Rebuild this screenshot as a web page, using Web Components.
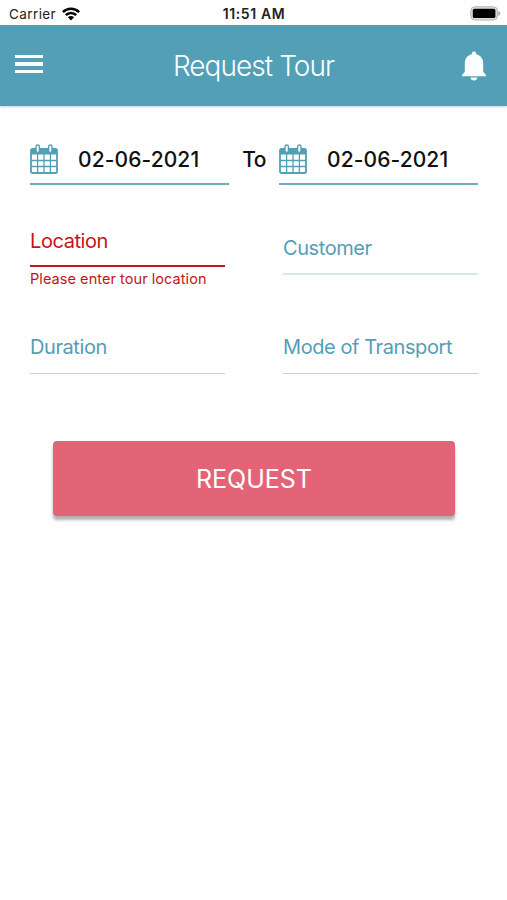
<!DOCTYPE html>
<html lang="en">
<head>
<meta charset="utf-8">
<title>Request Tour</title>
<style>
  :root {
    --color-primary: #539fb6;
    --color-line: #d4e8e6;
    --color-error: #c5151b;
    --color-action: #e36476;
  }
  body {
    margin: 0;
    background-color: #fefefe;
    font-family: Inter, "Liberation Sans", sans-serif;
  }
</style>
</head>
<body>
<tour-screen></tour-screen>

<script>
const define = (name, html, setup) => {
  const template = document.createElement("template");
  template.innerHTML = html;
  customElements.define(name, class extends HTMLElement {
    constructor() {
      super();
      this.attachShadow({ mode: "open" }).appendChild(template.content.cloneNode(true));
    }
    connectedCallback() {
      if (setup) setup(this);
    }
  });
};

define("tour-status-bar", `
  <style>
    :host {
      display: grid;
      grid-template-columns: 1fr auto 1fr;
      align-items: center;
      height: 25px;
      box-sizing: border-box;
      padding: 2px 6px 0 9px;
      font-size: 13.5px;
      line-height: 20px;
      color: #222;
      background-color: #fefefe;
    }
    .carrier {
      display: flex;
      align-items: center;
      gap: 6px;
      letter-spacing: 0.4px;
    }
    .time {
      font-weight: 600;
      font-size: 14px;
      letter-spacing: 0.6px;
      margin-right: 2px;
    }
    svg { display: block; }
    .battery { justify-self: end; }
  </style>
  <div class="carrier">
    <span>Carrier</span>
    <svg width="18" height="14" viewBox="0 0 18 14">
      <g fill="none" stroke="#000" stroke-width="2.5">
        <path d="M0.9 5.2C5.4 0.7 12.6 0.7 17.1 5.2"/>
        <path d="M3.8 8.2C6.8 5.2 11.2 5.2 14.2 8.2"/>
      </g>
      <path d="M5.9 10.3C7.6 8.6 10.4 8.6 12.1 10.3L9 13.6z"/>
    </svg>
  </div>
  <div class="time">11:51 AM</div>
  <svg class="battery" width="31" height="15" viewBox="0 0 31 15">
    <rect x="0.8" y="0.8" width="26.6" height="13.2" rx="4" fill="#ddd" stroke="#b4b4b4" stroke-width="1"/>
    <path d="M28.3 5c2.6.8 2.6 4.2 0 5z" fill="#aaa"/>
    <rect x="2.8" y="2.8" width="22.6" height="9.2" rx="1.6"/>
  </svg>
`);

define("tour-header", `
  <style>
    :host {
      display: grid;
      grid-template-columns: 1fr auto 1fr;
      align-items: center;
      height: 81px;
      box-sizing: border-box;
      padding: 0 20px 0 15px;
      color: #fafeff;
      background-color: var(--color-primary);
      box-shadow: 0 1px 2px rgba(83, 159, 182, 0.4);
    }
    .title {
      font-size: 28px;
      font-weight: 350;
      line-height: 34px;
      letter-spacing: -0.95px;
      padding-left: 5px;
      padding-top: 1px;
    }
    .menu {
      display: grid;
      gap: 4px;
      width: 28px;
      padding-bottom: 3px;
    }
    .menu i {
      height: 3.5px;
      background-color: #fafeff;
    }
    .bell {
      display: block;
      justify-self: end;
    }
  </style>
  <div class="menu"><i></i><i></i><i></i></div>
  <div class="title"><slot></slot></div>
  <svg class="bell" width="26" height="30" viewBox="0 0 26 30" fill="#fafeff">
    <path d="M13 0.6a2.2 2.2 0 0 1 2.2 2.2v.4C19.600 4.200 22.200 7.600 22.200 12.300V20.700L25 23.900V25.200H1V23.900L3.800 20.700V12.300C3.800 7.600 6.400 4.200 10.800 3.200V2.800A2.200 2.200 0 0 1 13 0.600Z"/>
    <path d="M9.700 26.600H16.300A3.300 2.900 0 0 1 9.700 26.600Z"/>
  </svg>
`);

define("tour-date", `
  <style>
    :host {
      display: flex;
      align-items: center;
      width: 199px;
      height: 53px;
      box-sizing: border-box;
      padding-top: 3px;
      border-bottom: 2px solid #6badbf;
    }
    svg {
      display: block;
      margin-right: 20px;
    }
    .value {
      font-size: 21px;
      font-weight: 500;
      line-height: 26px;
      letter-spacing: 0.1px;
      padding-top: 1px;
      color: #111;
      white-space: nowrap;
    }
  </style>
  <svg width="28" height="30" viewBox="0 0 28 30">
    <rect x="1" y="5" width="26" height="24" rx="1.600" fill="#fff" stroke="#539fb6" stroke-width="1.800"/>
    <path d="M1 5H27V10.500H1z" fill="#539fb6"/>
    <path d="M7.600 10V28M14 10V28M20.400 10V28M1 16.500H27M1 22.500H27" stroke="#539fb6" stroke-width="1.300"/>
    <rect x="6" y="1" width="3.400" height="7.400" rx="1.700" fill="#fff" stroke="#539fb6" stroke-width="1.400"/>
    <rect x="18.600" y="1" width="3.400" height="7.400" rx="1.700" fill="#fff" stroke="#539fb6" stroke-width="1.400"/>
  </svg>
  <div class="value"><slot></slot></div>
`);

define("tour-field", `
  <style>
    :host {
      display: block;
      color: var(--color-primary);
    }
    .label {
      height: 39px;
      border-bottom: 1px solid #b5dcdc;
      font-size: 20px;
      line-height: 26px;
      letter-spacing: -0.42px;
      white-space: nowrap;
    }
    :host([soft]) .label {
      border-bottom: 2px solid var(--color-line);
      height: 38px;
    }
    .helper {
      font-size: 14.500px;
      line-height: 20px;
      letter-spacing: 0.06px;
      padding-top: 2px;
      white-space: nowrap;
    }
    :host([error]) { color: var(--color-error); }
    :host([error]) .label {
      height: 37px;
      border-bottom: 2px solid var(--color-error);
    }
  </style>
  <div class="label"><slot></slot></div>
  <div class="helper"></div>
`, (el) => {
  el.shadowRoot.querySelector(".helper").textContent = el.getAttribute("error") || "";
});

define("tour-button", `
  <style>
    :host { display: block; }
    button {
      display: block;
      width: 100%;
      height: 75px;
      padding: 0;
      border: 0;
      border-radius: 4px;
      font: 400 25px/30px Inter, "Liberation Sans", sans-serif;
      color: #fff;
      background-color: var(--color-action);
      box-shadow: 0 4px 3px rgba(75, 60, 70, 0.4);
    }
  </style>
  <button type="button"><slot></slot></button>
`);

define("tour-screen", `
  <style>
    :host {
      display: block;
      width: 507px;
      height: 900px;
      overflow: hidden;
    }
    main { padding: 26px 29px 0 30px; }
    .dates {
      display: flex;
      justify-content: space-between;
      align-items: center;
    }
    .to {
      font-size: 21px;
      font-weight: 500;
      line-height: 26px;
      letter-spacing: -0.6px;
      padding-top: 3px;
      color: #111;
    }
    .fields {
      display: grid;
      grid-template-columns: 195px 195px;
      grid-template-rows: 99px 114px;
      column-gap: 58px;
      padding-top: 43px;
    }
    .fields .first { padding-top: 0; }
    .fields .lower { padding-top: 7px; }
    tour-button { margin: 0 23px; }
  </style>
  <tour-status-bar></tour-status-bar>
  <tour-header>Request Tour</tour-header>
  <main>
    <div class="dates">
      <tour-date>02-06-2021</tour-date>
      <span class="to">To</span>
      <tour-date>02-06-2021</tour-date>
    </div>
    <div class="fields">
      <tour-field class="first" error="Please enter tour location">Location</tour-field>
      <tour-field class="lower" soft>Customer</tour-field>
      <tour-field class="lower">Duration</tour-field>
      <tour-field class="lower">Mode of Transport</tour-field>
    </div>
    <tour-button>REQUEST</tour-button>
  </main>
`);
</script>
</body>
</html>
